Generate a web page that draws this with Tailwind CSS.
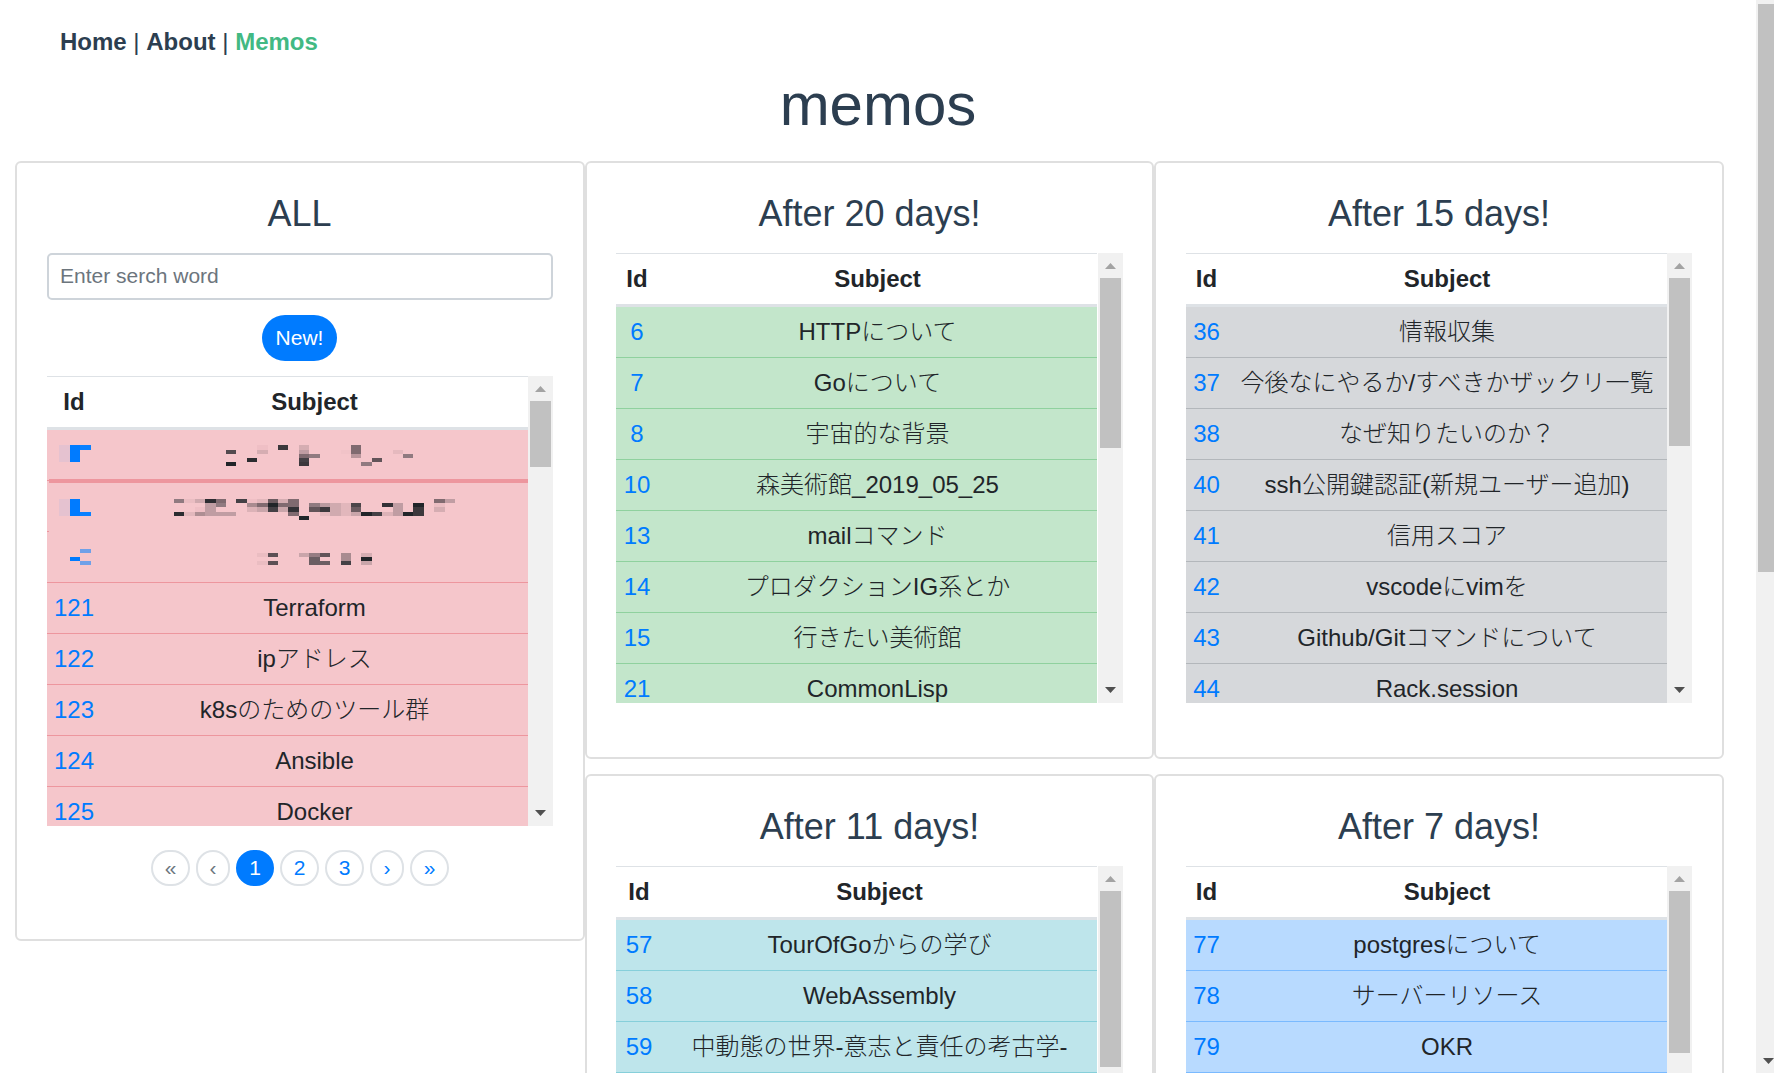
<!DOCTYPE html>
<html lang="ja">
<head>
<meta charset="utf-8">
<title>memos</title>
<script src="https://cdn.jsdelivr.net/npm/@tailwindcss/browser@4"></script>
</head>
<body class="h-[1073px] w-[1774px] overflow-hidden bg-white font-['Liberation_Sans','Noto_Sans_CJK_JP',sans-serif] text-2xl text-[#2c3e50]">
<div class="flex h-[1073px] overflow-hidden">
  <div class="w-[1756px] shrink-0">
    <nav class="h-[72px] pl-[60px] pt-[24px] leading-9 whitespace-pre"><a class="font-bold">Home</a> | <a class="font-bold">About</a> | <a class="font-bold text-[#42b983]">Memos</a></nav>
    <h1 class="h-[89px] text-center text-[60px] leading-[66px] font-normal">memos</h1>
    <main class="ml-[15px] flex w-[1709px] items-start">
      <section class="h-[780px] w-[570px] shrink-0 rounded-md border-2 border-[#dfdfdf] px-[30px] pt-[30px]">
        <h2 class="h-[60px] w-[505px] text-center text-4xl leading-[41px]">ALL</h2>
        <div class="flex h-[47px] items-center rounded-[5px] border-2 border-[#ced4da] px-[11px] pb-px text-[21px] text-[#6c757d]">Enter serch word</div>
        <div class="flex justify-center pt-[15px] pr-px pb-[15px]"><button class="h-[46px] w-[75px] rounded-full bg-[#007bff] text-[21px] text-white">New!</button></div>
        <div data-t="all"></div>
        <div class="mt-6 flex justify-center gap-1.5 text-[21px] leading-8 text-[#007bff]">
          <span class="h-9 w-[39px] rounded-full border-2 border-[#dee2e6] text-center text-[#6c757d]">«</span>
          <span class="h-9 w-[34px] rounded-full border-2 border-[#dee2e6] text-center text-[#6c757d]">‹</span>
          <span class="h-9 w-[38px] rounded-full border-2 border-[#007bff] bg-[#007bff] text-center text-white">1</span>
          <span class="h-9 w-[39px] rounded-full border-2 border-[#dee2e6] text-center">2</span>
          <span class="h-9 w-[39px] rounded-full border-2 border-[#dee2e6] text-center">3</span>
          <span class="h-9 w-[34px] rounded-full border-2 border-[#dee2e6] text-center">›</span>
          <span class="h-9 w-[39px] rounded-full border-2 border-[#dee2e6] text-center">»</span>
        </div>
      </section>
      <div class="grid grid-cols-[569px_570px] gap-y-[15px]">
        <section class="h-[598px] rounded-md border-2 border-[#dfdfdf] pl-[29px] pt-[30px]">
          <h2 class="h-[60px] w-[507px] text-center text-4xl leading-[41px]">After 20 days!</h2>
          <div data-t="d20"></div>
        </section>
        <section class="h-[598px] rounded-md border-2 border-[#dfdfdf] pl-[30px] pt-[30px]">
          <h2 class="h-[60px] w-[506px] text-center text-4xl leading-[41px]">After 15 days!</h2>
          <div data-t="d15"></div>
        </section>
        <section class="h-[598px] rounded-md border-2 border-[#dfdfdf] pl-[29px] pt-[30px]">
          <h2 class="h-[60px] w-[507px] text-center text-4xl leading-[41px]">After 11 days!</h2>
          <div data-t="d11"></div>
        </section>
        <section class="h-[598px] rounded-md border-2 border-[#dfdfdf] pl-[30px] pt-[30px]">
          <h2 class="h-[60px] w-[506px] text-center text-4xl leading-[41px]">After 7 days!</h2>
          <div data-t="d7"></div>
        </section>
      </div>
    </main>
  </div>
  <div class="flex w-[18px] shrink-0 flex-col overflow-hidden bg-[#f1f1f1] pl-0.5">
    <div class="mt-[4px] h-[568px] bg-[#c1c1c1]"></div>
    <svg class="mt-[486px] ml-[5px] h-[6px] w-[11px] shrink-0" viewBox="0 0 11 6"><path d="M0 0H11L5.5 6Z" fill="#505050"/></svg>
  </div>
</div>
<script>
const tables = {
  all: { id: 'w-[54px]', row: 'bg-[#f5c6cb] border-[#ed969e]', gap: '', thumb: 66, rows: [['',''],['',''],['',''],['121','Terraform'],['122','ipアドレス'],['123','k8sのためのツール群'],['124','Ansible'],['125','Docker']], mosaic: true },
  d20: { id: 'w-[42px]', row: 'bg-[#c3e6cb] border-[#8fd19e]', gap: 'ml-px', thumb: 170, rows: [['6','HTTPについて'],['7','Goについて'],['8','宇宙的な背景'],['10','森美術館_2019_05_25'],['13','mailコマンド'],['14','プロダクションIG系とか'],['15','行きたい美術館'],['21','CommonLisp']] },
  d15: { id: 'w-[41px]', row: 'bg-[#d6d8db] border-[#b3b7bb]', gap: '', thumb: 168, rows: [['36','情報収集'],['37','今後なにやるか/すべきかザックリ一覧'],['38','なぜ知りたいのか？'],['40','ssh公開鍵認証(新規ユーザー追加)'],['41','信用スコア'],['42','vscodeにvimを'],['43','Github/Gitコマンドについて'],['44','Rack.session']] },
  d11: { id: 'w-[46px]', row: 'bg-[#bee5eb] border-[#86cfda]', gap: 'ml-px', thumb: 176, rows: [['57','TourOfGoからの学び'],['58','WebAssembly'],['59','中動態の世界-意志と責任の考古学-'],['','']] },
  d7: { id: 'w-[41px]', row: 'bg-[#b8daff] border-[#7abaff]', gap: '', thumb: 162, rows: [['77','postgresについて'],['78','サーバーリソース'],['79','OKR'],['','']] }
};
// Redacted cells: x, y, width, height, fill
const blocks = [
[154,225,29,51,'#e5c2d0'],[183,225,26,51,'#007bff'],[209,225,29,15,'#0a80ff'],
[591,240,26,12,'#534a4f'],[591,276,26,12,'#212529'],[645,264,27,12,'#2b2c30'],[672,225,28,15,'#efbfc5'],[672,240,28,12,'#d5adb2'],[727,225,26,15,'#3c383c'],[781,225,27,15,'#d5adb2'],[781,240,27,12,'#c09da3'],[781,252,27,12,'#806a70'],[808,252,28,12,'#907a80'],[781,264,27,12,'#444045'],[781,276,27,12,'#3c383c'],[917,225,26,27,'#806a70'],[917,252,26,12,'#b9959b'],[891,240,26,12,'#f1c3c8'],[943,276,29,12,'#907a80'],[972,264,26,12,'#625459'],[1027,240,26,12,'#e5b9be'],[1053,252,26,12,'#907a80'],
[154,387,29,51,'#e5c2d0'],[183,387,26,51,'#007bff'],[209,426,29,12,'#0a80ff'],
[455,387,26,12,'#907a80'],[481,387,29,12,'#eabdc2'],[510,387,26,12,'#cfa9ae'],[536,387,28,12,'#2d2c31'],[564,387,27,12,'#806a70'],[536,399,28,39,'#c09da3'],[564,399,27,12,'#907a80'],[510,411,26,15,'#efbfc5'],[455,426,26,12,'#2b2c30'],[481,426,29,12,'#e2b7bc'],[510,426,26,12,'#ae8e93'],[564,426,53,12,'#c09da3'],[617,387,28,12,'#444045'],[645,387,27,12,'#efbfc5'],[672,387,28,12,'#e2b7bc'],[700,387,27,12,'#6b5b60'],[727,387,26,12,'#d5adb2'],[753,387,28,24,'#806a70'],[645,399,27,12,'#a98b90'],[672,399,28,12,'#806a70'],[700,399,27,12,'#212529'],[727,399,26,12,'#806a70'],[645,411,27,15,'#dcb2b7'],[672,411,28,15,'#c9a5aa'],[700,411,27,15,'#444045'],[727,411,26,15,'#c9a5aa'],[753,411,28,15,'#333136'],[753,426,28,12,'#806a70'],[781,438,27,12,'#212529'],[808,399,28,12,'#907a80'],[836,399,26,12,'#b99a9f'],[808,411,28,15,'#625459'],[836,411,26,15,'#3c383c'],[836,426,26,12,'#e5b9be'],[862,399,29,39,'#d0aaaf'],[891,399,26,39,'#e2b7bc'],[917,399,26,12,'#4b4549'],[917,411,26,15,'#6b5b60'],[917,426,26,12,'#c9a5aa'],[943,426,29,12,'#212529'],[972,426,26,12,'#444045'],[998,399,29,12,'#333136'],[998,426,29,12,'#dcb2b7'],[1027,399,26,39,'#c09da3'],[1053,426,26,12,'#212529'],[1079,399,29,12,'#212529'],[1079,411,29,27,'#3c383c'],[1134,387,29,12,'#806a70'],[1163,387,26,12,'#c09da3'],[1134,399,29,12,'#eabdc2'],[1134,411,29,15,'#d5adb2'],
[209,537,29,12,'#6fa0e8'],[183,561,26,12,'#007bff'],[209,573,29,12,'#6fa0e8'],
[672,549,28,12,'#eabdc2'],[672,573,28,12,'#eabdc2'],[700,549,27,12,'#5c5055'],[700,573,27,12,'#5c5055'],[781,549,27,12,'#c9a5aa'],[808,549,28,12,'#967d83'],[836,549,26,12,'#625459'],[808,561,28,24,'#6b5e63'],[836,573,26,12,'#6b5e63'],[891,549,26,24,'#a98b90'],[891,573,26,12,'#444045'],[943,549,29,12,'#d5adb2'],[943,561,29,12,'#212529'],[943,573,29,12,'#c9a5aa']
];
const mosaic = `<svg class="absolute top-[54px] left-0 h-[152px] w-[481px]" viewBox="123 180 1257 456" preserveAspectRatio="none" shape-rendering="crispEdges">
<rect x="128" y="327" width="1252" height="12" fill="#ed969e"/><rect x="128" y="480" width="1252" height="9" fill="#f5c6cb"/>
${blocks.map(([x,y,w,h,f]) => `<rect x="${x}" y="${y}" width="${w}" height="${h}" fill="${f}"/>`).join('')}</svg>`;
for (const el of document.querySelectorAll('[data-t]')) {
  const t = tables[el.dataset.t];
  el.className = 'flex h-[450px] overflow-hidden text-[#212529]';
  el.innerHTML = `<div class="relative w-[481px] shrink-0">
    <div class="flex h-[54px] border-t border-b-3 border-[#dee2e6] text-center leading-[50px] font-bold"><div class="${t.id} shrink-0">Id</div><div class="flex-1">Subject</div></div>
    ${t.rows.map(([a,b],i) => `<div class="flex text-center leading-[50px] whitespace-nowrap ${t.row} ${i ? 'h-[51px] border-t' : 'h-[50px]'}"><a class="${t.id} shrink-0 text-[#007bff]">${a}</a><div class="h-[50px] flex-1 font-light">${b}</div></div>`).join('')}
    ${t.mosaic ? mosaic : ''}</div>
  <div class="flex w-[25px] shrink-0 flex-col bg-[#f1f1f1] ${t.gap}">
    <svg class="mt-[10px] ml-[7px] h-[6px] w-[11px] shrink-0" viewBox="0 0 11 6"><path d="M0 6H11L5.5 0Z" fill="#a3a3a3"/></svg>
    <div class="mt-[9px] ml-0.5 w-[21px] shrink-0 bg-[#c1c1c1]" style="height:${t.thumb}px"></div>
    <svg class="mt-auto mb-[10px] ml-[7px] h-[6px] w-[11px] shrink-0" viewBox="0 0 11 6"><path d="M0 0H11L5.5 6Z" fill="#505050"/></svg>
  </div>`;
}
</script>
</body>
</html>
